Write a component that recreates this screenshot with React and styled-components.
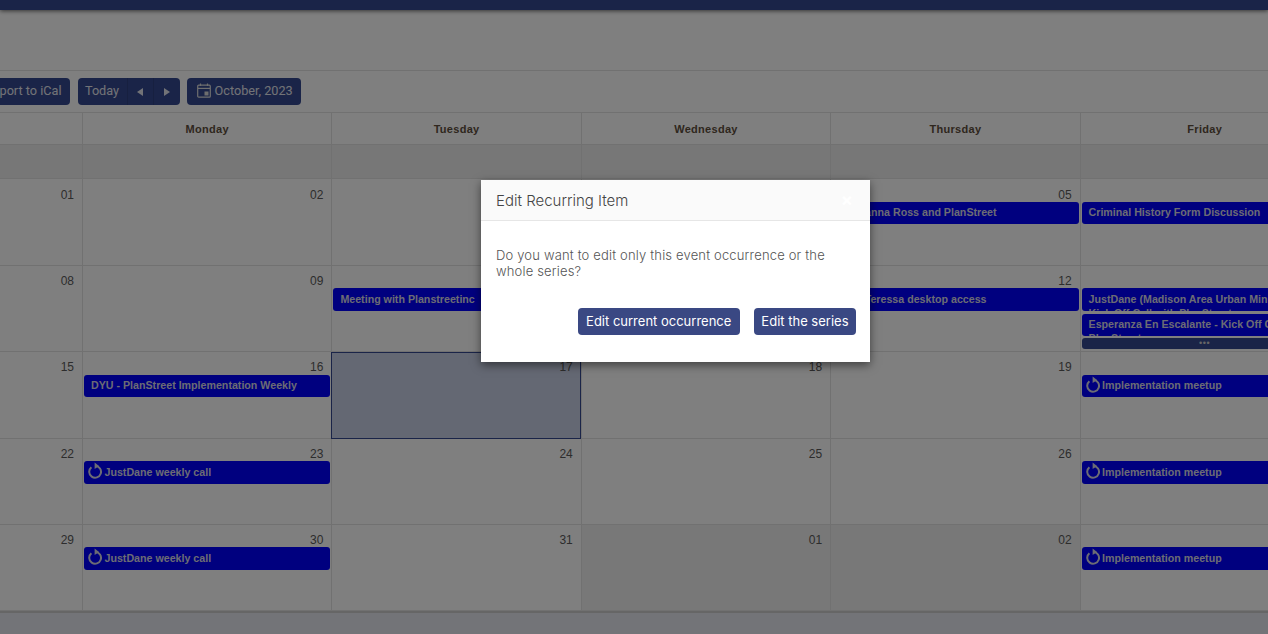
import React from "react";
import styled, { createGlobalStyle } from "styled-components";

const Global = createGlobalStyle`
  html, body { margin: 0; padding: 0; height: 100%; background: #fff; overflow: hidden; }
  #root { height: 634px; overflow: hidden; }
  * { box-sizing: border-box; }
`;

const Page = styled.div`
  position: relative;
  width: 1268px;
  height: 634px;
  overflow: hidden;
  display: flex;
  flex-direction: column;
  font-family: "Liberation Sans", Arial, sans-serif;
  background: #fff;
`;
const TopBar = styled.div`
  height: 10px;
  flex: none;
  background: #344890;
  box-shadow: 0 1px 4px rgba(0, 0, 0, 0.6);
`;
const Spacer = styled.div`
  height: 61px;
  flex: none;
  border-bottom: 1px solid #e2e2e2;
`;
const Toolbar = styled.div`
  height: 42px;
  flex: none;
  display: flex;
  align-items: flex-start;
  gap: 7px;
  padding-top: 7px;
  margin-left: -22px;
  border-bottom: 1px solid #e2e2e2;
`;
const NavyButton = styled.div`
  height: 27px;
  display: flex;
  align-items: center;
  background: #344890;
  border-radius: 4px;
  color: #e4e6ee;
  font-family: Roboto, sans-serif;
  font-size: 12.7px;
  white-space: nowrap;
  padding: 0 8px 2px;
  gap: 4px;
`;
const ButtonGroup = styled.div`
  height: 27px;
  display: flex;
  margin-left: 1px;
  background: #344890;
  border-radius: 4px;
  color: #e4e6ee;
  font-family: Roboto, sans-serif;
  font-size: 12.7px;
`;
const GroupCell = styled.div`
  width: ${(p) => p.$w}px;
  display: flex;
  align-items: center;
  justify-content: center;
  padding-bottom: ${(p) => (p.$first ? 2 : 0)}px;
  border-left: ${(p) => (p.$first ? "0" : "1px solid #2e4080")};
`;
const CalButton = styled(NavyButton)`
  padding: 0 8px 2px 10px;
`;
const Arrow = styled.i`
  width: 0;
  height: 0;
  border-top: 4px solid transparent;
  border-bottom: 4px solid transparent;
  ${(p) => (p.$left ? "border-right: 6px solid #e4e6ee;" : "border-left: 6px solid #e4e6ee;")}
`;
const Grid = styled.div`
  display: grid;
  grid-template-columns: repeat(6, 249.4px);
  grid-template-rows: 32px 34.4px repeat(5, 86.4px);
  margin-left: -167.4px;
  width: 1496.4px;
  flex: none;
`;
const HeadCell = styled.div`
  border-left: 1px solid #e2e2e2;
  border-bottom: 1px solid #e2e2e2;
  display: flex;
  align-items: center;
  justify-content: center;
  font-size: 11px;
  font-weight: 700;
  letter-spacing: 0.3px;
  color: #5e4e3c;
  padding-top: 1px;
`;
const AllDayCell = styled.div`
  border-left: 1px solid #e2e2e2;
  border-bottom: 1px solid #e2e2e2;
  background: #eeeeee;
`;
const DayCell = styled.div`
  border-left: 1px solid #e2e2e2;
  border-bottom: 1px solid #e2e2e2;
  padding: 9.2px 1px 0 1px;
  min-width: 0;
  background: ${(p) => (p.$selected ? "#c8d0e6" : p.$other ? "#f0f0f0" : "#fff")};
  ${(p) => p.$selected && "outline: 1px solid #344890; outline-offset: -1px;"}
`;
const DayNumber = styled.div`
  text-align: right;
  font-size: 12px;
  line-height: 13.2px;
  color: #5a5a5a;
  padding-right: 7px;
`;
const Event = styled.div`
  margin-top: ${(p) => (p.$tight ? 3 : 0)}px;
  height: 22.6px;
  background: #0000ff;
  border-radius: 3px;
  color: #d8d8e8;
  font-size: 10.67px;
  font-weight: 700;
  padding: 0 0 0 ${(p) => p.$indent || 7}px;
  overflow: hidden;
  display: flex;
  align-items: flex-start;
  gap: 1.5px;
  white-space: nowrap;
`;
const EventText = styled.span`
  flex: none;
  line-height: ${(p) => (p.$wrap ? "14px" : "20px")};
  padding-top: ${(p) => (p.$wrap ? "3.6px" : "0.6px")};
`;
const RepeatIcon = styled.svg`
  flex: none;
  margin: 1px 0 0 -4px;
`;
const More = styled.div`
  margin-top: 2px;
  height: 11px;
  background: #344890;
  border-radius: 3px;
  color: #ccc;
  font-size: 9px;
  line-height: 11px;
  text-align: center;
  letter-spacing: 0.5px;
  width: 246px;
`;
const Footer = styled.div`
  flex: 1;
  background: #e6e8f0;
  border-top: 2px solid #cdcdcd;
`;
const Overlay = styled.div`
  position: absolute;
  inset: 0;
  background: rgba(0, 0, 0, 0.5);
`;
const Modal = styled.div`
  position: absolute;
  left: 481px;
  top: 180px;
  width: 389px;
  height: 182px;
  background: #fff;
  box-shadow: 0 3px 9px rgba(0, 0, 0, 0.5);
  display: flex;
  flex-direction: column;
  font-family: Inter, sans-serif;
`;
const ModalHeader = styled.div`
  height: 41px;
  flex: none;
  background: #fafafa;
  border-bottom: 1px solid #e6e6e6;
  display: flex;
  align-items: center;
  justify-content: space-between;
  padding: 0 17px 0 15px;
`;
const ModalTitle = styled.div`
  font-size: 15px;
  font-weight: 300;
  color: #444;
`;
const Close = styled.div`
  color: #fff;
  font-size: 18px;
  font-weight: 700;
  line-height: 18px;
`;
const ModalBody = styled.div`
  padding: 26px 30px 0 15px;
  font-size: 13px;
  line-height: 16px;
  font-weight: 300;
  letter-spacing: 0.17px;
  color: #555;
`;
const ModalActions = styled.div`
  display: flex;
  justify-content: flex-end;
  gap: 14px;
  padding: 29px 14px 0 0;
`;
const ModalButton = styled.div`
  height: 27px;
  padding: 0 ${(p) => p.$pad}px 1px;
  display: flex;
  align-items: center;
  background: #3a4883;
  border-radius: 4px;
  color: #fff;
  font-size: 13px;
  white-space: nowrap;
`;

const Repeat = () => (
  <RepeatIcon width="16" height="17" viewBox="0 0 16 17" fill="none">
    <path d="M4.4 5.2A5.9 5.9 0 1 0 8.4 3.9" stroke="#d8d8e8" strokeWidth="2" />
    <path d="M7.6 0.4L12 3.9L7.6 7Z" fill="#d8d8e8" />
  </RepeatIcon>
);

const CalIcon = () => (
  <svg width="14" height="15" viewBox="0 0 14 15" fill="none">
    <rect x="0.7" y="2.2" width="12.6" height="12" rx="1" stroke="#ddd" strokeWidth="1.2" />
    <path d="M1 5.4H13" stroke="#ddd" strokeWidth="1.2" />
    <path d="M3.5 0.5V3M10.5 0.5V3" stroke="#ddd" strokeWidth="1.2" />
    <rect x="7.5" y="8.5" width="4" height="4" fill="#ddd" />
  </svg>
);

const days = ["", "Monday", "Tuesday", "Wednesday", "Thursday", "Friday"];
const rec = (text) => ({ text, rec: true });
const plain = (text, indent) => ({ text, indent });
const weeks = [
  [["01"], ["02"], ["03"], ["04"], ["05", plain("Johanna Ross and PlanStreet", 14)], ["06", plain("Criminal History Form Discussion")]],
  [["08"], ["09"], ["10", plain("Meeting with Planstreetinc")], ["11"], ["12", plain("Call Teressa desktop access", 10)], ["13", "stack"]],
  [["15"], ["16", plain("DYU - PlanStreet Implementation Weekly")], ["17", "selected"], ["18"], ["19"], ["20", rec("Implementation meetup")]],
  [["22"], ["23", rec("JustDane weekly call")], ["24"], ["25"], ["26"], ["27", rec("Implementation meetup")]],
  [["29"], ["30", rec("JustDane weekly call")], ["31"], ["01", "other"], ["02", "other"], ["03", rec("Implementation meetup")]],
];

const Cell = ({ num, item }) => (
  <DayCell $selected={item === "selected"} $other={item === "other"}>
    <DayNumber>{num}</DayNumber>
    {item === "stack" && (
      <>
        <Event>
          <EventText $wrap>JustDane (Madison Area Urban Ministry)<br />Kick Off Call with PlanStreet</EventText>
        </Event>
        <Event $tight>
          <EventText $wrap>Esperanza En Escalante - Kick Off Call with<br />PlanStreet</EventText>
        </Event>
        <More>•••</More>
      </>
    )}
    {item && item.text && (
      <Event $indent={item.indent}>
        {item.rec && <Repeat />}
        <EventText>{item.text}</EventText>
      </Event>
    )}
  </DayCell>
);

export default function App() {
  return (
    <Page>
      <Global />
      <TopBar />
      <Spacer />
      <Toolbar>
        <NavyButton>Export to iCal</NavyButton>
        <ButtonGroup>
          <GroupCell $first $w={49}>Today</GroupCell>
          <GroupCell $w={26}><Arrow $left /></GroupCell>
          <GroupCell $w={27}><Arrow /></GroupCell>
        </ButtonGroup>
        <CalButton><CalIcon />October, 2023</CalButton>
      </Toolbar>
      <Grid>
        {days.map((d, i) => <HeadCell key={i}>{d}</HeadCell>)}
        {days.map((d, i) => <AllDayCell key={i} />)}
        {weeks.flatMap((w, r) =>
          w.map(([num, item], c) => <Cell key={`${r}-${c}`} num={num} item={item} />)
        )}
      </Grid>
      <Footer />
      <Overlay />
      <Modal>
        <ModalHeader>
          <ModalTitle>Edit Recurring Item</ModalTitle>
          <Close>×</Close>
        </ModalHeader>
        <ModalBody>Do you want to edit only this event occurrence or the whole series?</ModalBody>
        <ModalActions>
          <ModalButton $pad={8.5}>Edit current occurrence</ModalButton>
          <ModalButton $pad={7.5}>Edit the series</ModalButton>
        </ModalActions>
      </Modal>
    </Page>
  );
}
